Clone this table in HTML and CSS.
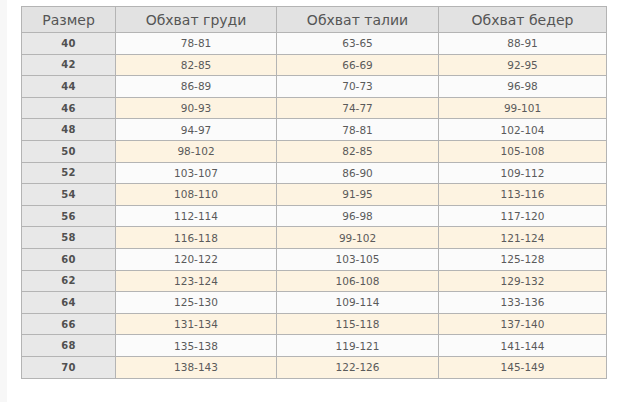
FILE: index.html
```html
<!DOCTYPE html>
<html lang="ru">
<head>
<meta charset="utf-8">
<link rel="stylesheet" href="styles.css">
</head>
<body>
<div class="page">
<table class="sizes">
<colgroup>
<col class="c1"><col class="c2"><col class="c3"><col class="c4">
</colgroup>
<thead>
<tr><th>Размер</th><th>Обхват груди</th><th>Обхват талии</th><th>Обхват бедер</th></tr>
</thead>
<tbody>
<tr><td class="sz">40</td><td>78-81</td><td>63-65</td><td>88-91</td></tr>
<tr class="alt"><td class="sz">42</td><td>82-85</td><td>66-69</td><td>92-95</td></tr>
<tr><td class="sz">44</td><td>86-89</td><td>70-73</td><td>96-98</td></tr>
<tr class="alt"><td class="sz">46</td><td>90-93</td><td>74-77</td><td>99-101</td></tr>
<tr><td class="sz">48</td><td>94-97</td><td>78-81</td><td>102-104</td></tr>
<tr class="alt"><td class="sz">50</td><td>98-102</td><td>82-85</td><td>105-108</td></tr>
<tr><td class="sz">52</td><td>103-107</td><td>86-90</td><td>109-112</td></tr>
<tr class="alt"><td class="sz">54</td><td>108-110</td><td>91-95</td><td>113-116</td></tr>
<tr><td class="sz">56</td><td>112-114</td><td>96-98</td><td>117-120</td></tr>
<tr class="alt"><td class="sz">58</td><td>116-118</td><td>99-102</td><td>121-124</td></tr>
<tr><td class="sz">60</td><td>120-122</td><td>103-105</td><td>125-128</td></tr>
<tr class="alt"><td class="sz">62</td><td>123-124</td><td>106-108</td><td>129-132</td></tr>
<tr><td class="sz">64</td><td>125-130</td><td>109-114</td><td>133-136</td></tr>
<tr class="alt"><td class="sz">66</td><td>131-134</td><td>115-118</td><td>137-140</td></tr>
<tr><td class="sz">68</td><td>135-138</td><td>119-121</td><td>141-144</td></tr>
<tr class="alt"><td class="sz">70</td><td>138-143</td><td>122-126</td><td>145-149</td></tr>
</tbody>
</table>
</div>
</body>
</html>
```
FILE: styles.css
```css
html, body {
  margin: 0;
  padding: 0;
  background: #ffffff;
}
body {
  width: 640px;
  height: 402px;
  overflow: hidden;
  background: linear-gradient(to right, #f7f7f7 0, #f7f7f7 7px, #ffffff 7px);
}
.page {
  padding: 6px 0 0 21px;
}
.sizes {
  border-collapse: collapse;
  table-layout: fixed;
  width: 585px;
  font-family: "DejaVu Sans", Verdana, sans-serif;
  color: #5a5a5a;
}
.c1 { width: 94px; }
.c2 { width: 161px; }
.c3 { width: 162px; }
.c4 { width: 168px; }
.sizes th, .sizes td {
  border: 1px solid #b4b4b4;
  text-align: center;
  padding: 0;
}
.sizes th {
  background: #e2e2e2;
  font-weight: normal;
  font-size: 14px;
  height: 25px;
  color: #555555;
}
.sizes td {
  font-size: 10.5px;
  height: 20.6px;
  background: #fbfbfb;
}
.sizes tr.alt td {
  background: #fdf3e1;
}
.sizes td.sz, .sizes tr.alt td.sz {
  background: #e8e8e8;
  font-weight: bold;
  font-size: 10px;
  letter-spacing: 0.3px;
  color: #505050;
}
```
